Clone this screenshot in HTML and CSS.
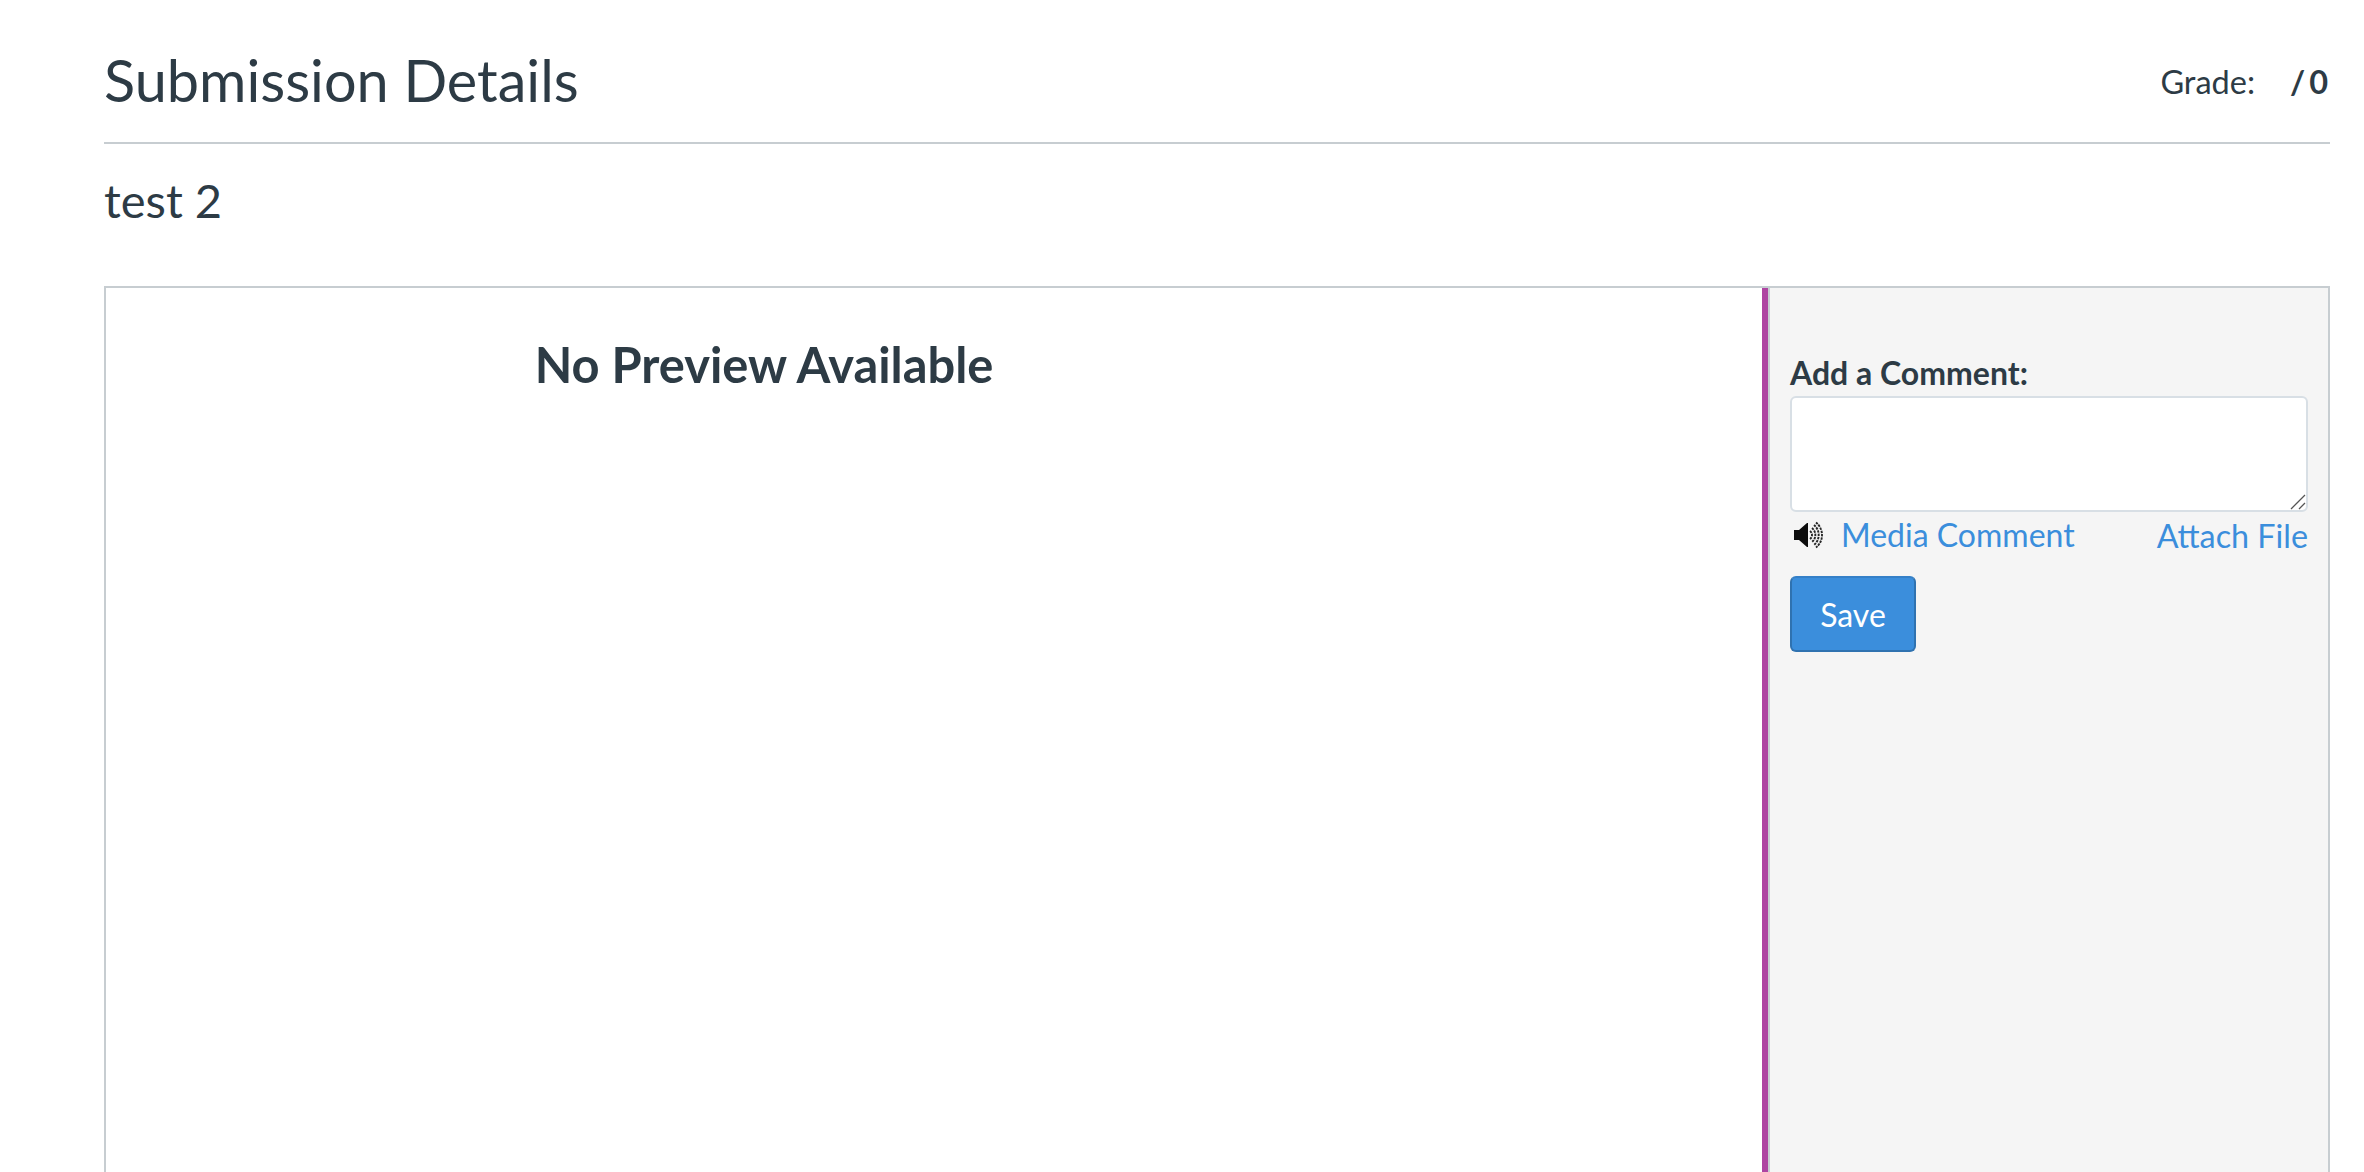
FILE: index.html
```html
<!DOCTYPE html>
<html lang="en">
<head>
  <meta charset="UTF-8">
  <title>Submission Details</title>
  <link rel="stylesheet" href="styles.css">
</head>
<body>
  <div class="page">
    <header class="page-header">
      <h1>Submission Details</h1>
      <div class="grade">
        <span>Grade:</span>
        <strong>/ 0</strong>
      </div>
    </header>
    <h2 class="submission-title">test 2</h2>
    <div class="submission-box">
      <div class="preview">
        <h3>No Preview Available</h3>
      </div>
      <div class="resizer"></div>
      <aside class="comments">
        <label class="comment-label" for="comment">Add a Comment:</label>
        <div class="comment-field">
          <textarea id="comment" class="comment-input"></textarea>
          <svg class="resize-grip" viewBox="0 0 16 16" width="16" height="16" aria-hidden="true">
            <path d="M1 15 15 1M9 15l6-6" fill="none" stroke="#555" stroke-width="1.300"/>
          </svg>
        </div>
        <div class="comment-links">
          <a class="media-link" href="#">
            <svg class="speaker" viewBox="0 0 30 28" width="30" height="28" aria-hidden="true">
              <path d="M1 9h5l8-7h1v24h-1l-8-7H1z" fill="#0d0d0d"/>
              <path d="M17 10a5 5 0 0 1 0 8M19 7a9 9 0 0 1 0 14M21 4a13 13 0 0 1 0 20M23 1.500a16 16 0 0 1 0 25" fill="none" stroke="#262626" stroke-width="1.900" stroke-dasharray="2.400 .9"/>
            </svg>
            <span>Media Comment</span>
          </a>
          <a class="attach-link" href="#">Attach File</a>
        </div>
        <button class="save-btn" type="button">Save</button>
      </aside>
    </div>
  </div>
</body>
</html>
```

FILE: styles.css
```css
html, body {
  margin: 0;
  padding: 0;
  height: 100%;
  overflow: hidden;
  background: #fff;
  color: #2d3b45;
  font-family: Lato, "Open Sans", sans-serif;
}
.page {
  padding: 0 34px 0 104px;
}
.page-header {
  display: flex;
  justify-content: space-between;
  align-items: center;
  box-sizing: border-box;
  height: 144px;
  padding-top: 16px;
  border-bottom: 2px solid #c7cdd1;
}
.page-header h1 {
  margin: 0;
  font-size: 57.6px;
  font-weight: 400;
}
.grade {
  display: flex;
  gap: 35px;
  font-size: 32.500px;
  padding-top: 4px;
  padding-right: 2px;
}
.grade strong {
  word-spacing: -4px;
}
.submission-title {
  margin: 0;
  font-size: 47px;
  font-weight: 400;
  line-height: 56px;
  padding-top: 28px;
  height: 114px;
}
.submission-box {
  display: flex;
  height: 1000px;
  border: 2px solid #c7cdd1;
}
.preview {
  width: 1656px;
  text-align: center;
  padding-right: 340px;
  box-sizing: border-box;
}
.preview h3 {
  margin: 48px 0 0;
  font-size: 48.800px;
  font-weight: 700;
  line-height: 56px;
  white-space: nowrap;
}
.resizer {
  width: 6px;
  background: #ae44a2;
}
.comments {
  flex: 1;
  border-left: 2px solid #c7cdd1;
  background: #f5f5f5;
  padding: 61px 20px 0;
}
.comment-label {
  display: block;
  font-size: 32px;
  font-weight: 700;
  line-height: 47px;
}
.comment-field {
  position: relative;
}
.comment-input {
  display: block;
  box-sizing: border-box;
  width: 100%;
  height: 116px;
  margin: 0;
  background: #fff;
  border: 2px solid #d8dfe5;
  border-radius: 6px;
  resize: none;
}
.resize-grip {
  position: absolute;
  right: 2px;
  bottom: 2px;
}
.comment-links {
  display: flex;
  justify-content: space-between;
  font-size: 32px;
  line-height: 42px;
}
.comment-links a {
  color: #3b8edc;
  text-decoration: none;
}
.media-link {
  display: flex;
  align-items: center;
  gap: 18px;
  padding-left: 3px;
}
.speaker {
  filter: blur(0.4px);
}
.attach-link {
  padding-top: 3px;
  font-size: 32.300px;
}
.save-btn {
  display: block;
  width: 126px;
  height: 76px;
  margin-top: 19px;
  background: #3b8edc;
  border: 2px solid #2f72b0;
  border-top-color: #3580c8;
  border-radius: 6px;
  color: #fff;
  font-family: inherit;
  font-size: 32px;
}
```
